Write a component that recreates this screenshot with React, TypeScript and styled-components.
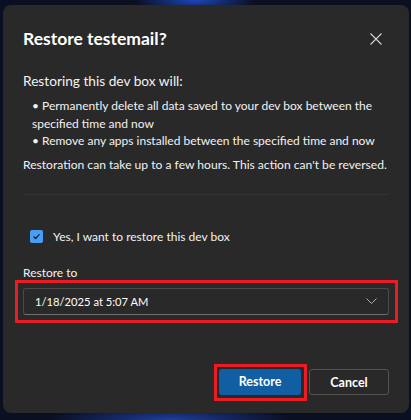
import React from "react";
import styled, { createGlobalStyle } from "styled-components";

const Global = createGlobalStyle`
  html, body { margin: 0; padding: 0; }
  body {
    width: 411px;
    height: 420px;
    overflow: hidden;
    background:
      radial-gradient(ellipse 60px 14px at 195px 0px, #1d47b8 0%, rgba(29,71,184,0) 100%),
      radial-gradient(ellipse 120px 16px at 170px 420px, #1f3d9c 0%, rgba(31,61,156,0) 100%),
      #0a0f22;
    font-family: "Lato", "Liberation Sans", sans-serif;
  }
`;

const Dialog = styled.div`
  box-sizing: border-box;
  width: 406px;
  height: 408px;
  margin: 5px 0 0 3px;
  padding: 0 20px;
  background: #292929;
  border-radius: 8px;
  display: flex;
  flex-direction: column;
  color: #ffffff;
`;

const Header = styled.div`
  display: flex;
  align-items: center;
  justify-content: space-between;
  height: 22px;
  margin-top: 23px;
`;

const Title = styled.h2`
  margin: 0;
  font-size: 17.5px;
  font-weight: 700;
  line-height: 22px;
  color: #ffffff;
`;

const CloseButton = styled.button`
  width: 20px;
  height: 20px;
  margin-right: 3px;
  padding: 0;
  border: none;
  background: transparent;
  display: flex;
  align-items: center;
  justify-content: center;
  color: #d6d6d6;
`;

const Text = styled.p<{ $mt: number; $size: number }>`
  margin: ${(p) => p.$mt}px 0 0 0;
  font-size: ${(p) => p.$size}px;
  line-height: 17.5px;
  white-space: nowrap;
  color: #f2f2f2;
`;

const List = styled.ul`
  list-style: none;
  margin: 8px 0 0 0;
  padding: 0 0 0 9px;
`;

const Item = styled.li`
  font-size: 12px;
  line-height: 17.5px;
  color: #f2f2f2;
`;

const Divider = styled.hr`
  margin: 20px 0 0 0;
  border: none;
  height: 1px;
  background: #323232;
`;

const CheckRow = styled.label`
  display: flex;
  align-items: center;
  gap: 10px;
  height: 20px;
  margin: 32px 0 0 7px;
  font-size: 12px;
  color: #f2f2f2;
`;

const Box = styled.span`
  width: 13px;
  height: 13px;
  border-radius: 2px;
  background: #479ef5;
  display: flex;
  align-items: center;
  justify-content: center;
`;

const FieldLabel = styled.div`
  margin-top: 17.5px;
  font-size: 12px;
  line-height: 17px;
  color: #f2f2f2;
`;

const Highlight = styled.div<{ $pad: string }>`
  border: 3px solid #ec1c24;
  padding: ${(p) => p.$pad};
`;

const DropWrap = styled(Highlight)`
  margin: -1.5px -9px 0 -8px;
`;

const Dropdown = styled.div`
  box-sizing: border-box;
  height: 27px;
  border: 1px solid #4a4a4a;
  border-bottom-color: #707070;
  border-radius: 3px;
  padding: 0 11px 0 11px;
  display: flex;
  align-items: center;
  justify-content: space-between;
  font-size: 11.2px;
  color: #ffffff;
`;

const Footer = styled.div`
  display: flex;
  justify-content: flex-end;
  align-items: center;
  gap: 2px;
  margin-top: 41px;
`;

const Button = styled.button<{ $primary?: boolean }>`
  box-sizing: border-box;
  height: 26px;
  width: ${(p) => (p.$primary ? 82 : 80)}px;
  border-radius: 3px;
  border: 1px solid ${(p) => (p.$primary ? "transparent" : "#545454")};
  background: ${(p) => (p.$primary ? "#115ea3" : "#292929")};
  color: #ffffff;
  font-family: "Lato", "Liberation Sans", sans-serif;
  font-size: 12.5px;
  font-weight: 700;
  padding: 0;
`;

export default function App() {
  return (
    <>
      <Global />
      <Dialog>
        <Header>
          <Title>Restore testemail?</Title>
          <CloseButton aria-label="Close">
            <svg width="12" height="12" viewBox="0 0 12 12">
              <path d="M0.5 0.5 L11.5 11.5 M11.5 0.5 L0.5 11.5" stroke="currentColor" strokeWidth="1.1" />
            </svg>
          </CloseButton>
        </Header>
        <Text $mt={21.5} $size={13.7}>Restoring this dev box will:</Text>
        <List>
          <Item>• Permanently delete all data saved to your dev box between the specified time and now</Item>
          <Item>• Remove any apps installed between the specified time and now</Item>
        </List>
        <Text $mt={6.5} $size={12.1}>Restoration can take up to a few hours. This action can't be reversed.</Text>
        <Divider />
        <CheckRow>
          <Box>
            <svg width="9" height="9" viewBox="0 0 9 9">
              <path d="M1.8 4.8 L3.6 6.5 L7.2 2.6" fill="none" stroke="#1b1b1b" strokeWidth="1.2" strokeLinecap="round" strokeLinejoin="round" />
            </svg>
          </Box>
          Yes, I want to restore this dev box
        </CheckRow>
        <FieldLabel>Restore to</FieldLabel>
        <DropWrap $pad="5px 6px 5px 5px">
          <Dropdown>
            <span>1/18/2025 at 5:07 AM</span>
            <svg width="11" height="6" viewBox="0 0 11 6">
              <path d="M0.5 0.5 L5.5 5.5 L10.5 0.5" fill="none" stroke="#b0b0b0" strokeWidth="1" />
            </svg>
          </Dropdown>
        </DropWrap>
        <Footer>
          <Highlight $pad="2px 3px 3px 2px">
            <Button $primary>Restore</Button>
          </Highlight>
          <Button>Cancel</Button>
        </Footer>
      </Dialog>
    </>
  );
}
